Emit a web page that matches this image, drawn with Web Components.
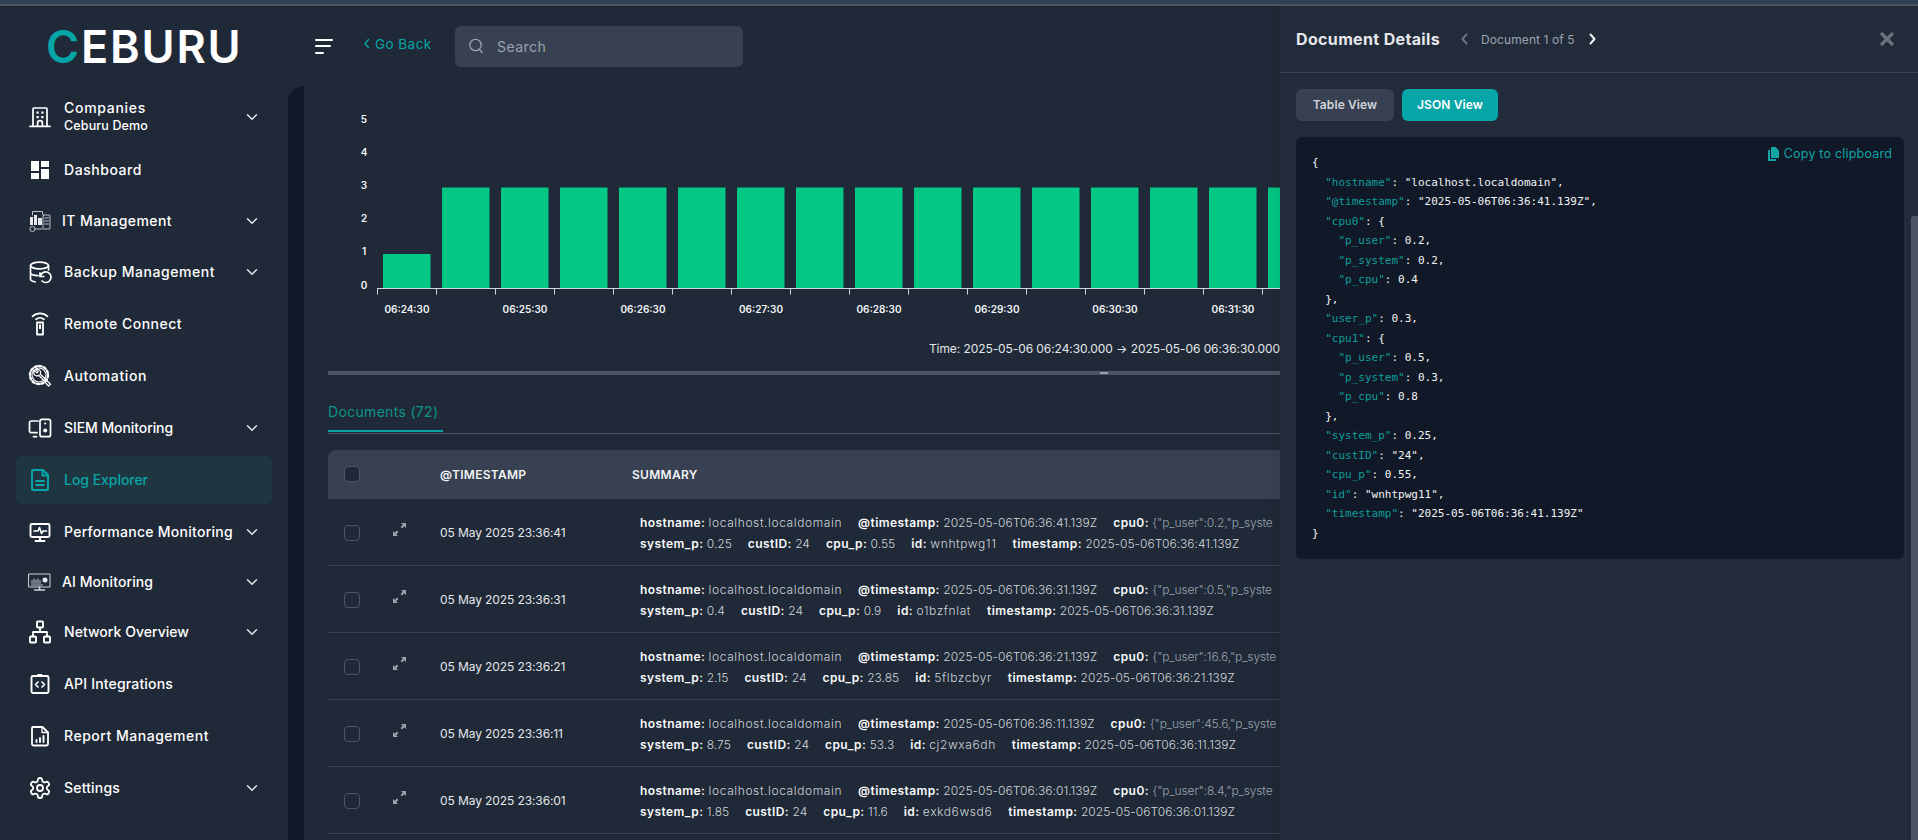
<!DOCTYPE html>
<html lang="en"><head><meta charset="utf-8"><title>Ceburu Log Explorer</title>
<style>
html,body{margin:0;padding:0;background:#1f2937;font-family:Inter,"Noto Sans",sans-serif;}
body{width:1918px;height:840px;overflow:hidden;}
</style></head>
<body>
<app-shell>
  <side-nav slot="nav">
    <nav-item icon="building" label="Companies" w="82" sub="Ceburu Demo" chevron h="56"></nav-item>
    <nav-item icon="dashboard" label="Dashboard" w="78"></nav-item>
    <nav-item icon="it" label="IT Management" w="110" chevron h="46" tight></nav-item>
    <nav-item icon="backup" label="Backup Management" w="151" chevron></nav-item>
    <nav-item icon="remote" label="Remote Connect" w="118"></nav-item>
    <nav-item icon="auto" label="Automation" w="83"></nav-item>
    <nav-item icon="siem" label="SIEM Monitoring" w="109" chevron></nav-item>
    <nav-item icon="log" label="Log Explorer" w="84" active></nav-item>
    <nav-item icon="perf" label="Performance Monitoring" w="169" chevron></nav-item>
    <nav-item icon="ai" label="AI Monitoring" w="91" chevron h="44" tight></nav-item>
    <nav-item icon="network" label="Network Overview" w="125" chevron></nav-item>
    <nav-item icon="api" label="API Integrations" w="109"></nav-item>
    <nav-item icon="report" label="Report Management" w="145"></nav-item>
    <nav-item icon="settings" label="Settings" w="56" chevron></nav-item>
  </side-nav>
  <top-bar slot="top"></top-bar>
  <log-view slot="main">
    <hist-chart></hist-chart>
    <doc-tabs></doc-tabs>
    <doc-table>
      <doc-row date="05 May 2025 23:36:41" ts="2025-05-06T06:36:41.139Z" cpu='{"p_user":0.2,"p_syste' sys="0.25" cp="0.55" did="wnhtpwg11"></doc-row>
      <doc-row date="05 May 2025 23:36:31" ts="2025-05-06T06:36:31.139Z" cpu='{"p_user":0.5,"p_syste' sys="0.4" cp="0.9" did="o1bzfnlat"></doc-row>
      <doc-row date="05 May 2025 23:36:21" ts="2025-05-06T06:36:21.139Z" cpu='{"p_user":16.6,"p_syste' sys="2.15" cp="23.85" did="5flbzcbyr"></doc-row>
      <doc-row date="05 May 2025 23:36:11" ts="2025-05-06T06:36:11.139Z" cpu='{"p_user":45.6,"p_syste' sys="8.75" cp="53.3" did="cj2wxa6dh"></doc-row>
      <doc-row date="05 May 2025 23:36:01" ts="2025-05-06T06:36:01.139Z" cpu='{"p_user":8.4,"p_syste' sys="1.85" cp="11.6" did="exkd6wsd6"></doc-row>
    </doc-table>
  </log-view>
  <detail-panel slot="panel"></detail-panel>
</app-shell>
<script>
const P='font-family:Inter,"Noto Sans",sans-serif;';
const cv=document.createElement('canvas').getContext('2d');
function fit(text,font,w){cv.font=font;return ((w-cv.measureText(text).width)/text.length).toFixed(3);}
const ICONS={
building:`<path d="M2 21.4h20M5 21V4a1 1 0 0 1 1-1h12a1 1 0 0 1 1 1v17M9.6 21v-3a2.4 2.4 0 0 1 4.8 0v3"/><g fill="#fff" stroke="none"><rect x="8.5" y="6.5" width="2.2" height="2.2"/><rect x="13.3" y="6.5" width="2.2" height="2.2"/><rect x="8.5" y="11" width="2.2" height="2.2"/><rect x="13.3" y="11" width="2.2" height="2.2"/></g>`,
dashboard:`<g fill="#fff" stroke="none"><rect x="3" y="3" width="8" height="10"/><rect x="13" y="3" width="8" height="6"/><rect x="3" y="15" width="8" height="6"/><rect x="13" y="11" width="8" height="10"/></g>`,
it:`<g stroke-width=".9" stroke="#d1d5db"><path d="M4.5 6V2.5h10V5"/><rect x="15" y="6" width="7" height="14" rx=".5"/><path d="M16.5 9h4M16.5 12h4M16.5 15h4"/><circle cx="4.5" cy="20" r="2.6"/><path d="M8 20h6"/></g><g fill="#e5e7eb" stroke="none"><rect x="2" y="8" width="3" height="8"/><rect x="6" y="6" width="3" height="10"/><rect x="10" y="9" width="4" height="7"/></g>`,
backup:`<ellipse cx="11.5" cy="5.500" rx="9" ry="3.400"/><path d="M2.500 5.500v13.500c0 1.500 1.800 2.400 4.500 2.800M20.500 5.500V10M2.500 12.500c0 1.700 3.500 3 7.500 3.200"/><path d="M12.500 16.200a5.300 5.300 0 1 1 1.500 4.800"/><path d="M12 12.800v3.700h3.700"/>`,
remote:`<path d="M4.500 4.300a11 11 0 0 1 15 0M8 7.300a6 6 0 0 1 8 0"/><rect x="9" y="10.500" width="6" height="12" stroke-width="1.800"/><rect x="11" y="12.500" width="2" height="4.500" fill="#fff" stroke="none"/>`,
auto:`<circle cx="11" cy="11" r="9" stroke-width="2.400" stroke-dasharray="2.300 2.410"/><circle cx="11" cy="11" r="7" stroke-width="1.100"/><path d="M6.800 6.700a3 3 0 0 0 4 4.500l9.700 10.800 2-1.800-10.300-10.200a3 3 0 0 0-3.900-4.200l1.800 1.800-1.100 1.300z" stroke-width="1.200"/>`,
siem:`<path d="M10 5H3.200A1.700 1.700 0 0 0 1.500 6.700V15a1.700 1.700 0 0 0 1.700 1.700H9M5.500 20.700h3"/><rect x="12" y="3.300" width="10.500" height="17.400" rx="2"/><circle cx="17.200" cy="14.500" r="2" fill="#fff" stroke="none"/><circle cx="17.200" cy="7.500" r="1.100" fill="#fff" stroke="none"/>`,
log:`<g stroke="#06a5a8" stroke-width="2"><path d="M5 2h10l5 5v13.500a1.500 1.500 0 0 1-1.500 1.500h-13A1.500 1.500 0 0 1 4 20.500V3a1 1 0 0 1 1-1z"/><path d="M14.500 2v5.500H20M8 13h8M8 17h8"/></g>`,
perf:`<rect x="2.500" y="4" width="19" height="13" rx="1.500" stroke-width="1.900"/><path d="M6 11h4l1.500-3.500 2 6 1.500-2.500h3.500" stroke-width="1.600"/><path d="M12 17v3.500M7.500 21h9" stroke-width="1.900"/>`,
ai:`<rect x="1" y="4" width="21" height="13" stroke-width="1" stroke="#d1d5db"/><path d="M4 10.500v3M6 9v4.500M8 10v3.500M10 9v4.500M12 10.500v3M3.500 15h11" stroke-width=".9" stroke="#d1d5db"/><circle cx="17" cy="10" r="2.500" fill="#e5e7eb" stroke="none"/><path d="M6.500 20h10M11.500 17v3" stroke-width="1.500" stroke="#d1d5db"/>`,
network:`<rect x="9" y="1.500" width="6" height="6" rx=".8" stroke-width="1.900"/><rect x="2" y="16.500" width="6" height="6" rx=".8" stroke-width="1.900"/><rect x="16" y="16.500" width="6" height="6" rx=".8" stroke-width="1.900"/><path d="M12 7.500V12M5 16.500V12h14v4.500" stroke-width="1.800"/>`,
api:`<rect x="3.500" y="4" width="17" height="17" rx="1.500" stroke-width="1.900"/><path d="M10 2.500h4V4h-4z" fill="#fff" stroke-width="1"/><path d="M10 10l-2.500 2.500L10 15M14 10l2.500 2.500L14 15" stroke-width="1.700"/>`,
report:`<path d="M5 3h9.500L20 8.500V20a1.500 1.500 0 0 1-1.500 1.500h-13A1.500 1.500 0 0 1 4 20V4a1 1 0 0 1 1-1z" stroke-width="1.800"/><path d="M14 3v5.500h6" stroke-width="1.300"/><path d="M8.500 18v-2M12 18v-4M15.500 18v-6" stroke-width="1.900"/>`,
settings:`<path d="M12.220 2h-.44a2 2 0 0 0-2 2v.18a2 2 0 0 1-1 1.730l-.43.25a2 2 0 0 1-2 0l-.15-.08a2 2 0 0 0-2.730.73l-.22.38a2 2 0 0 0 .73 2.730l.15.1a2 2 0 0 1 1 1.720v.51a2 2 0 0 1-1 1.740l-.15.09a2 2 0 0 0-.73 2.730l.22.38a2 2 0 0 0 2.730.73l.15-.08a2 2 0 0 1 2 0l.43.25a2 2 0 0 1 1 1.730V20a2 2 0 0 0 2 2h.44a2 2 0 0 0 2-2v-.18a2 2 0 0 1 1-1.730l.43-.25a2 2 0 0 1 2 0l.15.08a2 2 0 0 0 2.730-.73l.22-.39a2 2 0 0 0-.73-2.730l-.15-.08a2 2 0 0 1-1-1.740v-.5a2 2 0 0 1 1-1.740l.15-.09a2 2 0 0 0 .73-2.730l-.22-.38a2 2 0 0 0-2.730-.73l-.15.08a2 2 0 0 1-2 0l-.43-.25a2 2 0 0 1-1-1.730V4a2 2 0 0 0-2-2z" stroke-width="1.800"/><circle cx="12" cy="12" r="3" stroke-width="1.800"/>`
};
function el(name,render){customElements.define(name,class extends HTMLElement{constructor(){super();this.attachShadow({mode:'open'});}connectedCallback(){this.shadowRoot.innerHTML=render(this);}});}

el('app-shell',()=>`<style>
:host{display:block;position:relative;width:1918px;height:840px;overflow:hidden;background:#1f2937;color:#fff}
.strip{height:4px;background:#334155;border-bottom:2px solid #4b5563}
.row{display:flex;height:834px}
.nav{flex:0 0 288px}
.col{flex:1;display:flex;flex-direction:column;min-width:0}
.body{flex:1;display:flex;min-height:0}
.gutter{flex:0 0 16px;background:#111827;border-top-left-radius:16px}
.main{flex:1;min-width:0;overflow:hidden}
</style>
<div class="strip"></div>
<div class="row"><div class="nav"><slot name="nav"></slot></div>
<div class="col"><slot name="top"></slot><div class="body"><div class="gutter"></div><div class="main"><slot name="main"></slot></div></div></div></div>
<slot name="panel"></slot>`);

el('side-nav',()=>`<style>
:host{display:block;height:834px;overflow:hidden}
.logo{height:80px;box-sizing:border-box;padding-left:46px;display:flex;align-items:center;font:600 45px/1 Inter,sans-serif;letter-spacing:1.800px;color:#fff}
.logo b{font-weight:600;color:#06a5a8}
.list{display:flex;flex-direction:column;gap:4px;padding:0 16px}
</style><div class="logo"><span><b>C</b>EBURU</span></div><div class="list"><slot></slot></div>`);

el('nav-item',h=>{const a=h.hasAttribute('active'),t=h.hasAttribute('tight'),lab=h.getAttribute('label'),sub=h.getAttribute('sub');
const ls=fit(lab,'450 14px Inter',+h.getAttribute('w'));const sls=sub?fit(sub,'450 12.5px Inter',84):0;
return `<style>
:host{display:flex;align-items:center;height:${h.getAttribute('h')||48}px;box-sizing:border-box;padding-left:12px;padding-right:14px;${sub?'padding-top:5px;':''}border-radius:6px;${a?'background:#1f3641;':''}
${P}color:${a?'#06a5a8':'#fff'};font-size:14px;font-weight:450}
svg.i{flex:0 0 24px;width:24px;height:24px;fill:none;stroke:#fff;stroke-width:1.7;stroke-linecap:round;stroke-linejoin:round;overflow:visible}
.t{margin-left:${t?10:12}px;white-space:nowrap;line-height:18px;letter-spacing:${ls}px}
.s{font-size:12.500px;letter-spacing:${sls}px}
svg.c{margin-left:auto;flex:0 0 12px;width:12px;height:12px;fill:none;stroke:#e5e7eb;stroke-width:1.500;stroke-linecap:round;stroke-linejoin:round}
</style><svg class="i" viewBox="0 0 24 24">${ICONS[h.getAttribute('icon')]}</svg>
<div class="t"><div>${lab}</div>${sub?`<div class="s">${sub}</div>`:''}</div>
${h.hasAttribute('chevron')?`<svg class="c" viewBox="0 0 12 12"><path d="M1.500 3.800 6 8.300l4.500-4.500"/></svg>`:''}`});

el('top-bar',()=>`<style>
:host{display:flex;align-items:center;height:80px;box-sizing:border-box;padding-left:27px;${P}}
.burger{display:flex;flex-direction:column;gap:4.500px;width:18px}
.burger i{display:block;height:2px;background:#fff;border-radius:1px}
.back{margin-left:31px;display:flex;align-items:center;gap:5px;color:#06a5a8;font-size:13.500px;letter-spacing:.45px;position:relative;top:-2px;width:68px;white-space:nowrap}
.back svg{width:6px;height:11px;fill:none;stroke:#06a5a8;stroke-width:1.300;stroke-linecap:round;stroke-linejoin:round;margin-top:-2px}
.search{margin-left:23px;width:288px;height:41px;background:#374151;border-radius:6px;display:flex;align-items:center;padding-left:14px;box-sizing:border-box;color:#9ca3af;font-size:14px;letter-spacing:.45px;gap:14px}
.search svg{width:14px;height:16px;fill:none;stroke:#9ca3af;stroke-width:1.300;stroke-linecap:round}
</style>
<div class="burger"><i></i><i style="width:16px"></i><i style="width:9px"></i></div>
<div class="back"><svg viewBox="0 0 6 11"><path d="M4.500 1.500 1 5.500l3.500 4"/></svg><span>Go Back</span></div>
<div class="search"><svg viewBox="0 0 14 16"><circle cx="6.500" cy="7" r="5.700"/><path d="m11 12 2 2.500"/></svg><span>Search</span></div>`);

el('log-view',()=>`<style>:host{display:block;width:952px;margin-left:24px;${P}color:#fff}</style><slot></slot>`);

el('hist-chart',()=>{
 let s='';
 [5,4,3,2,1,0].forEach((n,i)=>{s+=`<text x="36" y="${36.500+i*33.200}" text-anchor="middle">${n}</text>`;});
 s+=`<rect x="55" y="168" width="47.500" height="34"/>`;
 for(let i=0;i<15;i++){s+=`<rect x="${114+i*59}" y="101.500" width="47.500" height="100.500"/>`;}
 s+=`<path d="M49 202.500H952" stroke="#d1d5db" stroke-width="1"/>`;
 for(let i=0;i<16;i++){s+=`<path d="M${49.500+i*59} 202.500v6" stroke="#d1d5db" stroke-width="1"/>`;}
 ['06:24:30','06:25:30','06:26:30','06:27:30','06:28:30','06:29:30','06:30:30','06:31:30'].forEach((t,i)=>{s+=`<text x="${79+i*118}" y="226.500" text-anchor="middle">${t}</text>`;});
 return `<style>
:host{display:block}
svg{display:block;width:952px;height:250px;overflow:hidden}
rect{fill:#03c785}
text{font:600 10px Inter,sans-serif;fill:#f3f4f6}
.time{height:26px;line-height:26px;text-align:right;font-size:12px;color:#e5e7eb;white-space:nowrap;letter-spacing:-.08px}
.bar{margin-top:9px;height:4px;background:#4b5563;position:relative}
.bar i{position:absolute;left:772px;top:1px;width:8px;height:2px;background:#9ca3af}
</style><svg viewBox="0 0 952 250">${s}</svg>
<div class="time">Time: 2025-05-06 06:24:30.000 → 2025-05-06 06:36:30.000</div><div class="bar"><i></i></div>`;});

el('doc-tabs',()=>`<style>
:host{display:block;margin-top:26px;border-bottom:1px solid #4b5563;height:32px;${P}}
.t{display:inline-block;height:28px;line-height:20px;box-sizing:content-box;border-bottom:2px solid #06a5a8;color:#0d9488;font-size:14px;letter-spacing:.32px;white-space:nowrap;width:115px}
</style><div class="t">Documents (72)</div>`);

el('doc-table',()=>`<style>
:host{display:block;margin-top:16px;${P}}
.h{display:grid;grid-template-columns:65px 47px 192px 1fr;align-items:center;height:48px;padding-bottom:1px;background:#374151;border-top-left-radius:8px;color:#f3f4f6;font-size:12px;font-weight:600;letter-spacing:.3px}
.h span{white-space:nowrap}
i{display:block;width:16px;height:16px;box-sizing:border-box;margin-left:16px;border:1px solid #4b5563;border-radius:4px;background:#1f2937}
</style><div class="h"><i></i><b></b><span>@TIMESTAMP</span><span>SUMMARY</span></div><slot></slot>`);

el('doc-row',h=>{const g=n=>h.getAttribute(n);
 const pair=(k,v,c)=>`<span class="p"><b>${k}:</b> <em class="${c||''}">${v}</em></span>`;
 return `<style>
:host{display:grid;grid-template-columns:65px 47px 192px 1fr;align-items:center;height:67px;box-sizing:border-box;border-bottom:1px solid #374151;${P}}
.c{display:block;width:16px;height:16px;box-sizing:border-box;margin:2px 0 0 16px;border:1px solid #4b5563;border-radius:4px}
svg{display:block;width:13px;height:13px;margin-bottom:5px;fill:#9ca3af}
.d{font-size:12px;color:#e5e7eb;font-weight:400;white-space:nowrap;letter-spacing:-.1px}
.s{padding-left:8px;font-size:12px;line-height:21px;white-space:nowrap;overflow:hidden;margin-top:2px}
.l{display:flex;gap:16px}
.p{white-space:nowrap}
b{font-weight:600;color:#f9fafb;letter-spacing:.42px}
em{font-style:normal;font-weight:300;color:#d1d5db;letter-spacing:.6px}
em.n{letter-spacing:.02px}
em.j{color:#9ca3af;letter-spacing:-.15px}
</style><span class="c"></span>
<svg viewBox="0 0 13 13"><path d="M8 0h5v5l-1.800-1.800-2.200 2.200-1.400-1.400 2.200-2.200zM5 13H0V8l1.800 1.800L4 7.600 5.400 9 3.200 11.200z"/></svg>
<span class="d">${g('date')}</span>
<div class="s"><div class="l">${pair('hostname','localhost.localdomain')}${pair('@timestamp',g('ts'),'n')}${pair('cpu0',g('cpu'),'j')}</div>
<div class="l">${pair('system_p',g('sys'),'n')}${pair('custID','24','n')}${pair('cpu_p',g('cp'),'n')}${pair('id',g('did'))}${pair('timestamp',g('ts'),'n')}</div></div>`;});

el('detail-panel',()=>{
 const L=[['{'],['  ','hostname','"localhost.localdomain",'],['  ','@timestamp','"2025-05-06T06:36:41.139Z",'],['  ','cpu0','{'],['    ','p_user','0.2,'],['    ','p_system','0.2,'],['    ','p_cpu','0.4'],['  },'],['  ','user_p','0.3,'],['  ','cpu1','{'],['    ','p_user','0.5,'],['    ','p_system','0.3,'],['    ','p_cpu','0.8'],['  },'],['  ','system_p','0.25,'],['  ','custID','"24",'],['  ','cpu_p','0.55,'],['  ','id','"wnhtpwg11",'],['  ','timestamp','"2025-05-06T06:36:41.139Z"'],['}']];
 const code=L.map(a=>`<div class="ln">${a.length==1?a[0]:`${a[0]}<span class="k">"${a[1]}"</span>: ${a[2]}`}</div>`).join('');
 return `<style>
:host{position:absolute;left:1280px;top:6px;bottom:0;right:0;background:#212b3a;box-shadow:-6px 0 10px rgba(0,0,0,.06);${P}color:#fff;display:block}
.head{height:67px;box-sizing:border-box;border-bottom:1px solid #374151;display:flex;align-items:center;padding-left:16px;position:relative}
h2{margin:0;font-size:16px;font-weight:700;color:#e5e7eb;letter-spacing:.35px;white-space:nowrap;width:145px}
.nav{display:flex;align-items:center;margin-left:20px;color:#9ca3af;font-size:12px;letter-spacing:.1px;white-space:nowrap}
.nav svg{width:7px;height:12px;fill:none;stroke-width:2;stroke-linecap:round;stroke-linejoin:round}
.nav span{margin:0 12px 0 13px;width:96px}
.x{position:absolute;left:600px;top:26px;width:14px;height:14px;stroke:#6b7280;stroke-width:3.200;fill:none;stroke-linecap:round}
.body{padding:16px 14px 0 16px}
.btns{display:flex;gap:8px}
.btn{height:32px;line-height:32px;border-radius:6px;font-size:12px;font-weight:600;text-align:center;white-space:nowrap;letter-spacing:.1px}
.b1{width:98px;background:#374151;color:#d1d5db}
.b2{width:96px;background:#06a5a8;color:#fff}
.box{position:relative;margin-top:16px;height:422px;box-sizing:border-box;background:#111827;border-radius:6px;padding:16px}
.code{font:11px/19.500px "DejaVu Sans Mono",monospace;color:#f3f4f6}
.ln{white-space:pre;height:19.500px}
.k{color:#0f9e9b}
.copy{position:absolute;top:7px;right:12px;display:flex;align-items:center;gap:5px;color:#12a5a5;font-size:12.500px;letter-spacing:.2px;line-height:20px;white-space:nowrap}
.copy svg{width:11px;height:14px;fill:#12a5a5}
.sb{position:absolute;left:631px;top:210px;bottom:0;width:7px;background:#4b5563;border-radius:3px 0 0 0}
</style>
<div class="head"><h2>Document Details</h2><div class="nav"><svg viewBox="0 0 7 12" stroke="#6b7280"><path d="M5.500 1.500 1.500 6l4 4.500"/></svg><span>Document 1 of 5</span><svg viewBox="0 0 7 12" stroke="#f3f4f6"><path d="M1.500 1.500 5.500 6l-4 4.500"/></svg></div>
<svg class="x" viewBox="0 0 14 14"><path d="M2 2l10 10M12 2 2 12"/></svg></div>
<div class="body"><div class="btns"><div class="btn b1">Table View</div><div class="btn b2">JSON View</div></div>
<div class="box"><div class="copy"><svg viewBox="0 0 11 14"><path d="M3 0h4.500L11 3.500V11H3zM0 3h2v9h6v2H0z"/></svg><span>Copy to clipboard</span></div><div class="code">${code}</div></div></div>
<div class="sb"></div>`;});
</script>
</body></html>
